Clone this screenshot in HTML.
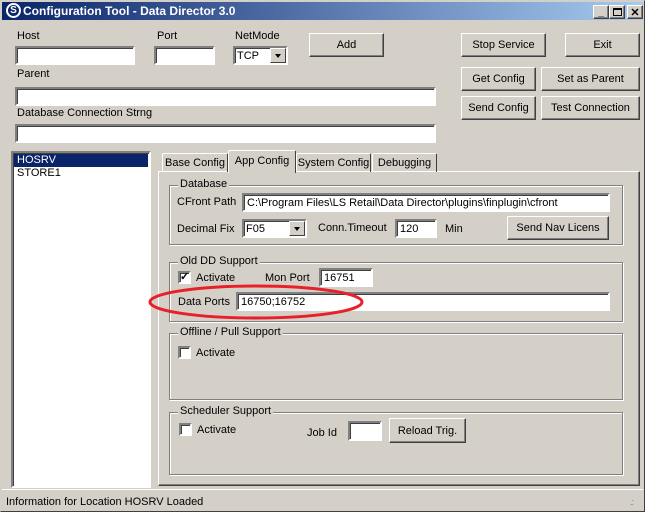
<!DOCTYPE html>
<html><head><style>
*{box-sizing:border-box;margin:0;padding:0}
body{width:645px;height:512px;overflow:hidden;background:#d4d0c8;font-family:"Liberation Sans",sans-serif;font-size:11px;color:#000;position:relative}
.a{position:absolute;white-space:nowrap}
.in{position:absolute;background:#fff;border:2px solid;border-color:#808080 #fff #fff #808080;box-shadow:inset 1px 1px 0 #404040;padding:1px 3px;line-height:14px;font-size:11px;white-space:nowrap;overflow:hidden}
.bt{position:absolute;background:#d4d0c8;border:1px solid;border-color:#fff #404040 #404040 #fff;box-shadow:inset -1px -1px 0 #808080;text-align:center;font-size:11px;display:flex;align-items:center;justify-content:center;white-space:nowrap}
.gb{position:absolute;border:1px solid #808080;box-shadow:1px 1px 0 #fff,inset 1px 1px 0 #fff}
.gl{position:absolute;top:-8px;left:8px;background:#d4d0c8;padding:0 2px;font-size:11px;white-space:nowrap}
.cb{position:absolute;width:13px;height:13px;background:#fff;border:2px solid;border-color:#808080 #fff #fff #808080;box-shadow:inset 1px 1px 0 #404040}
.tab{position:absolute;top:153px;height:19px;border:1px solid;border-color:#fff #404040 transparent #fff;border-bottom:none;padding:3px 0 0;text-align:center;font-size:11px;white-space:nowrap;border-radius:2px 2px 0 0}
.dd{position:absolute;right:0;top:0;width:16px;height:15px;background:#d4d0c8;border:1px solid;border-color:#fff #404040 #404040 #fff}
.dd:after{content:"";position:absolute;left:4px;top:5px;border:3.5px solid transparent;border-top:4px solid #000}
.l{position:absolute;white-space:nowrap;font-size:11px}
</style></head><body>
<div class="a" style="left:0;top:0;width:645px;height:512px;border:1px solid;border-color:#d4d0c8 #404040 #404040 #d4d0c8"></div>
<div class="a" style="left:2px;top:2px;width:641px;height:18px;background:linear-gradient(90deg,#0a246a,#a6caf0)"></div>
<div class="a" style="left:6px;top:3px;width:15px;height:15px;border:2px solid #fff;border-radius:50%;color:#fff;font-weight:bold;font-size:10px;line-height:11px;text-align:center">S</div>
<div class="a" style="left:23px;top:4px;color:#fff;font-weight:bold;font-size:12px">Configuration Tool - Data Director 3.0</div>
<div class="bt" style="left:593px;top:5px;width:16px;height:14px;font-size:10px;font-weight:bold;align-items:flex-end">_</div>
<div class="bt" style="left:609px;top:5px;width:16px;height:14px"><div style="width:9px;height:8px;border:1px solid #000;border-top-width:2px"></div></div>
<div class="bt" style="left:627px;top:5px;width:16px;height:14px;font-weight:bold;font-size:11px">✕</div>

<div class="l" style="left:17px;top:30px">Host</div>
<div class="in" style="left:15px;top:46px;width:120px;height:19px"></div>
<div class="l" style="left:157px;top:30px">Port</div>
<div class="in" style="left:154px;top:46px;width:61px;height:19px"></div>
<div class="l" style="left:235px;top:30px">NetMode</div>
<div class="in" style="left:233px;top:46px;width:55px;height:19px;padding:1px 2px">TCP<div class="dd"></div></div>
<div class="bt" style="left:309px;top:33px;width:75px;height:24px">Add</div>
<div class="bt" style="left:461px;top:33px;width:85px;height:24px">Stop Service</div>
<div class="bt" style="left:565px;top:33px;width:75px;height:24px">Exit</div>
<div class="bt" style="left:461px;top:67px;width:75px;height:24px">Get Config</div>
<div class="bt" style="left:541px;top:67px;width:99px;height:24px">Set as Parent</div>
<div class="bt" style="left:461px;top:96px;width:75px;height:24px">Send Config</div>
<div class="bt" style="left:541px;top:96px;width:99px;height:24px">Test Connection</div>
<div class="l" style="left:17px;top:68px">Parent</div>
<div class="in" style="left:15px;top:87px;width:421px;height:19px"></div>
<div class="l" style="left:17px;top:107px">Database Connection Strng</div>
<div class="in" style="left:15px;top:124px;width:421px;height:19px"></div>

<div class="in" style="left:11px;top:151px;width:140px;height:337px;padding:1px">
<div style="background:#0a246a;color:#fff;padding-left:3px;height:13px;line-height:13px">HOSRV</div>
<div style="padding-left:3px;height:13px;line-height:13px">STORE1</div></div>

<div class="a" style="left:158px;top:171px;width:482px;height:315px;border:1px solid;border-color:#fff #404040 #404040 #fff;box-shadow:inset -1px -1px 0 #808080"></div>
<div class="tab" style="left:162px;width:66px">Base Config</div>
<div class="tab" style="left:296px;width:75px">System Config</div>
<div class="tab" style="left:372px;width:65px">Debugging</div>
<div class="tab" style="left:228px;top:150px;height:23px;width:68px;background:#d4d0c8;padding-top:4px">App Config</div>

<div class="gb" style="left:169px;top:185px;width:454px;height:60px"><div class="gl">Database</div></div>
<div class="l" style="left:177px;top:196px">CFront Path</div>
<div class="in" style="left:242px;top:193px;width:368px;height:19px">C:\Program Files\LS Retail\Data Director\plugins\finplugin\cfront</div>
<div class="l" style="left:177px;top:223px">Decimal Fix</div>
<div class="in" style="left:242px;top:219px;width:65px;height:19px;padding:1px 2px">F05<div class="dd"></div></div>
<div class="l" style="left:318px;top:222px">Conn.Timeout</div>
<div class="in" style="left:395px;top:219px;width:42px;height:19px">120</div>
<div class="l" style="left:445px;top:223px">Min</div>
<div class="bt" style="left:507px;top:216px;width:102px;height:24px">Send Nav Licens</div>

<div class="gb" style="left:169px;top:262px;width:454px;height:60px"><div class="gl">Old DD Support</div></div>
<div class="cb" style="left:178px;top:271px;font-size:11px;line-height:9px;font-weight:bold;text-align:center">✓</div>
<div class="l" style="left:196px;top:272px">Activate</div>
<div class="l" style="left:265px;top:272px">Mon Port</div>
<div class="in" style="left:319px;top:268px;width:54px;height:19px">16751</div>
<div class="l" style="left:178px;top:296px">Data Ports</div>
<div class="in" style="left:236px;top:292px;width:374px;height:19px">16750;16752</div>
<svg class="a" style="left:148px;top:282px" width="220" height="40"><ellipse cx="108" cy="20" rx="106" ry="16" fill="none" stroke="#e8202a" stroke-width="3"/></svg>

<div class="gb" style="left:169px;top:333px;width:454px;height:67px"><div class="gl">Offline / Pull Support</div></div>
<div class="cb" style="left:178px;top:346px"></div>
<div class="l" style="left:196px;top:347px">Activate</div>

<div class="gb" style="left:169px;top:412px;width:454px;height:63px"><div class="gl">Scheduler Support</div></div>
<div class="cb" style="left:179px;top:423px"></div>
<div class="l" style="left:197px;top:424px">Activate</div>
<div class="l" style="left:307px;top:427px">Job Id</div>
<div class="in" style="left:348px;top:421px;width:34px;height:20px"></div>
<div class="bt" style="left:389px;top:418px;width:77px;height:25px">Reload Trig.</div>

<div class="a" style="left:2px;top:489px;width:641px;height:1px;background:#fff"></div>
<div class="l" style="left:6px;top:496px">Information for Location HOSRV Loaded</div>
<div class="a" style="left:630px;top:497px;color:#808080;font-size:9px;letter-spacing:-1px">.:</div>
</body></html>
